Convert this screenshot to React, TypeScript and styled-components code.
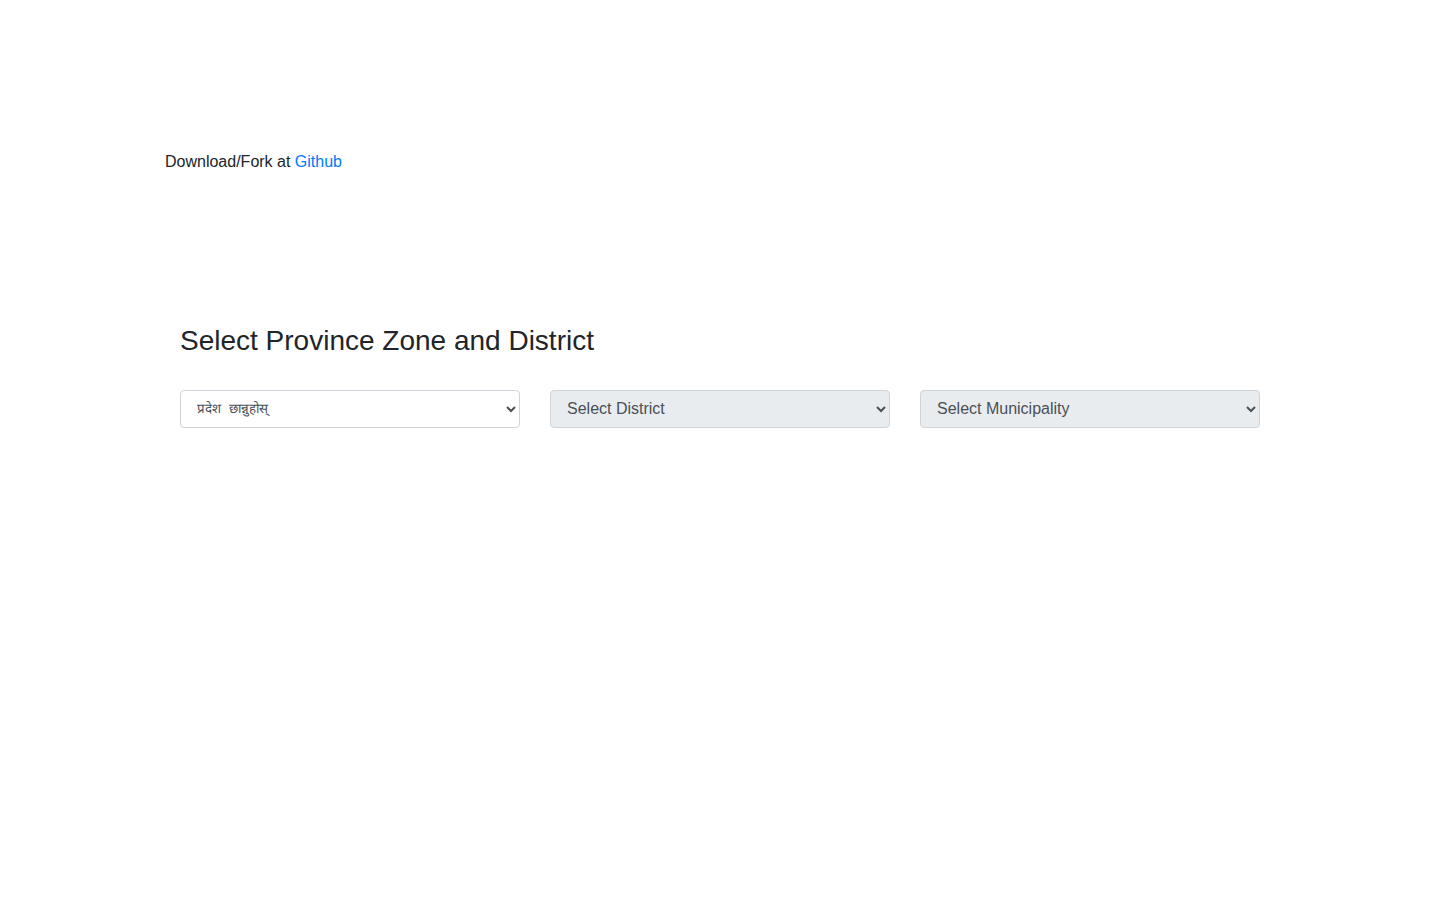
import React from "react";
import styled, { createGlobalStyle } from "styled-components";

const Global = createGlobalStyle`
  * { box-sizing: border-box; }
  body {
    margin: 0;
    background: #fff;
    font-family: "Liberation Sans", Arial, sans-serif;
    font-size: 16px;
    line-height: 1.5;
    color: #212529;
  }
`;

const Container = styled.div`
  max-width: 1140px;
  margin: 0 auto;
  padding: 0 15px;
`;

const Top = styled.p`
  margin: 0;
  padding-top: 150px;
  height: 174px;
`;

const Link = styled.a`
  color: #007bff;
  text-decoration: none;
`;

const Row = styled.div`
  display: flex;
  flex-wrap: wrap;
`;

const Col = styled.div<{ $span: number }>`
  flex: 0 0 ${(p) => (p.$span / 12) * 100}%;
  max-width: ${(p) => (p.$span / 12) * 100}%;
  padding: 0 15px;
`;

const Section = styled.section`
  padding-top: 150px;
`;

const Heading = styled.h3`
  margin: 0 0 32px;
  font-size: 28px;
  font-weight: 500;
  line-height: 1.2;
  color: #212529;
`;

const Select = styled.select<{ $native?: boolean }>`
  display: block;
  width: 100%;
  height: 38px;
  padding: 6px 12px;
  font-family: ${(p) => (p.$native ? '"DejaVu Sans Mono", monospace' : '"Liberation Sans", Arial, sans-serif')};
  font-size: ${(p) => (p.$native ? "13.33px" : "16px")};
  line-height: 1.5;
  color: #495057;
  background-color: #fff;
  border: 1px solid #ced4da;
  border-radius: 4px;
  &:disabled {
    background-color: #e9ecef;
    opacity: 1;
  }
`;

export default function App() {
  return (
    <>
      <Global />
      <Container>
        <Top>
          Download/Fork at <Link href="#">Github</Link>
        </Top>
      </Container>
      <Container>
        <Section>
          <Row>
            <Col $span={12}>
              <Heading>Select Province Zone and District</Heading>
            </Col>
          </Row>
          <Row>
            <Col $span={4}>
              <Select $native defaultValue="">
                <option value="">प्रदेश छान्नुहोस्</option>
              </Select>
            </Col>
            <Col $span={4}>
              <Select disabled defaultValue="">
                <option value="">Select District</option>
              </Select>
            </Col>
            <Col $span={4}>
              <Select disabled defaultValue="">
                <option value="">Select Municipality</option>
              </Select>
            </Col>
          </Row>
        </Section>
      </Container>
    </>
  );
}
